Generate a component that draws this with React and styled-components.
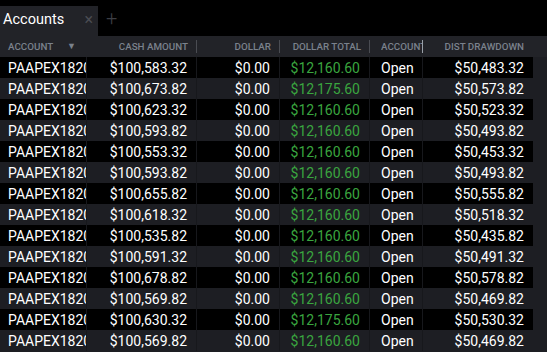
import React from "react";
import styled, { createGlobalStyle } from "styled-components";

const Global = createGlobalStyle`
  html, body { margin: 0; padding: 0; background: #000; }
  body { font-family: Roboto, "Liberation Sans", sans-serif; overflow: hidden; }
`;

const Page = styled.div`
  width: 547px;
  height: 352px;
  background: #000;
  display: flex;
  flex-direction: column;
  overflow: hidden;
`;

const TabBar = styled.div`
  height: 36px;
  flex: none;
  display: flex;
  align-items: flex-end;
  background: #000;
`;

const Tab = styled.div`
  width: 98px;
  height: 30px;
  box-sizing: border-box;
  background: #222328;
  display: flex;
  align-items: center;
  padding: 0 5px 3px 3px;
  color: #fff;
  font-size: 14.5px;
`;

const TabTitle = styled.span`
  flex: 1;
`;

const Close = styled.span`
  color: #4a4c52;
  font-size: 16px;
  line-height: 1;
`;

const Plus = styled.span`
  color: #3c3e44;
  font-size: 20px;
  font-weight: 300;
  margin: 0 0 8px 8px;
  line-height: 1;
`;

const Body = styled.div`
  flex: 1;
  display: flex;
  flex-direction: column;
  background: #1d1e23;
  min-height: 0;
`;

const cols = "87px 110px 83px 90px 53px 110px";

const HeaderRow = styled.div`
  height: 21px;
  flex: none;
  display: grid;
  grid-template-columns: ${cols} 14px;
  background: #222328;
  align-items: center;
`;

const HeaderCell = styled.div`
  position: relative;
  height: 100%;
  display: flex;
  align-items: center;
  justify-content: ${(p) => (p.$left ? "flex-start" : "flex-end")};
  padding: 0 ${(p) => (p.$pr ?? 9)}px 0 ${(p) => (p.$pl ?? 8)}px;
  color: #7a818c;
  font-size: 9.8px;
  font-weight: 500;
  white-space: nowrap;
  overflow: hidden;
  box-sizing: border-box;
`;

const HeaderText = styled.span`
  overflow: hidden;
`;

const Sep = styled.span`
  position: absolute;
  right: 0;
  top: 4px;
  width: 1px;
  height: 13px;
  background: ${(p) => (p.$bright ? "#9aa0a8" : "#4a4c52")};
`;

const Arrow = styled.span`
  position: absolute;
  left: 67px;
  top: 5px;
  font-size: 9px;
  color: #7a818c;
`;

const Rows = styled.div`
  flex: 1;
  display: flex;
  flex-direction: column;
`;

const Row = styled.div`
  height: 21px;
  flex: none;
  display: grid;
  grid-template-columns: ${cols} 14px;
  background: ${(p) => (p.$alt ? "#1d1e23" : "#000")};
`;

const Cell = styled.div`
  display: flex;
  align-items: center;
  justify-content: ${(p) => (p.$left ? "flex-start" : "flex-end")};
  padding: 0 ${(p) => (p.$pr ?? 9)}px 0 ${(p) => (p.$pl ?? 8)}px;
  color: ${(p) => (p.$green ? "#3aa53f" : "#fff")};
  font-size: 14px;
  white-space: nowrap;
  overflow: hidden;
  box-sizing: border-box;
  border-right: ${(p) => (p.$last ? "none" : "1px solid #17181c")};
`;

const Scroll = styled.div`
  background: #1d1e23;
`;

const data = [
  ["$100,583.32", "$12,160.60", "$50,483.32"],
  ["$100,673.82", "$12,175.60", "$50,573.82"],
  ["$100,623.32", "$12,160.60", "$50,523.32"],
  ["$100,593.82", "$12,160.60", "$50,493.82"],
  ["$100,553.32", "$12,160.60", "$50,453.32"],
  ["$100,593.82", "$12,160.60", "$50,493.82"],
  ["$100,655.82", "$12,160.60", "$50,555.82"],
  ["$100,618.32", "$12,160.60", "$50,518.32"],
  ["$100,535.82", "$12,160.60", "$50,435.82"],
  ["$100,591.32", "$12,160.60", "$50,491.32"],
  ["$100,678.82", "$12,160.60", "$50,578.82"],
  ["$100,569.82", "$12,160.60", "$50,469.82"],
  ["$100,630.32", "$12,175.60", "$50,530.32"],
  ["$100,569.82", "$12,160.60", "$50,469.82"],
];

export default function App() {
  return (
    <Page>
      <Global />
      <TabBar>
        <Tab>
          <TabTitle>Accounts</TabTitle>
          <Close>×</Close>
        </Tab>
        <Plus>+</Plus>
      </TabBar>
      <Body>
        <HeaderRow>
          <HeaderCell $left>
            ACCOUNT
            <Arrow>▼</Arrow>
          </HeaderCell>
          <HeaderCell>
            CASH AMOUNT
            <Sep />
          </HeaderCell>
          <HeaderCell>
            DOLLAR
            <Sep />
          </HeaderCell>
          <HeaderCell>
            DOLLAR TOTAL
            <Sep />
          </HeaderCell>
          <HeaderCell $left $pl={11} $pr={1}>
            <HeaderText>ACCOUNT STATUS</HeaderText>
            <Sep $bright />
          </HeaderCell>
          <HeaderCell>DIST DRAWDOWN</HeaderCell>
          <div />
        </HeaderRow>
        <Rows>
          {data.map((r, i) => (
            <Row key={i} $alt={i % 2 === 1}>
              <Cell $left $pr={0}>PAAPEX18204</Cell>
              <Cell>{r[0]}</Cell>
              <Cell>$0.00</Cell>
              <Cell $green>{r[1]}</Cell>
              <Cell $left $pl={11}>Open</Cell>
              <Cell $last>{r[2]}</Cell>
              <Scroll />
            </Row>
          ))}
        </Rows>
      </Body>
    </Page>
  );
}
